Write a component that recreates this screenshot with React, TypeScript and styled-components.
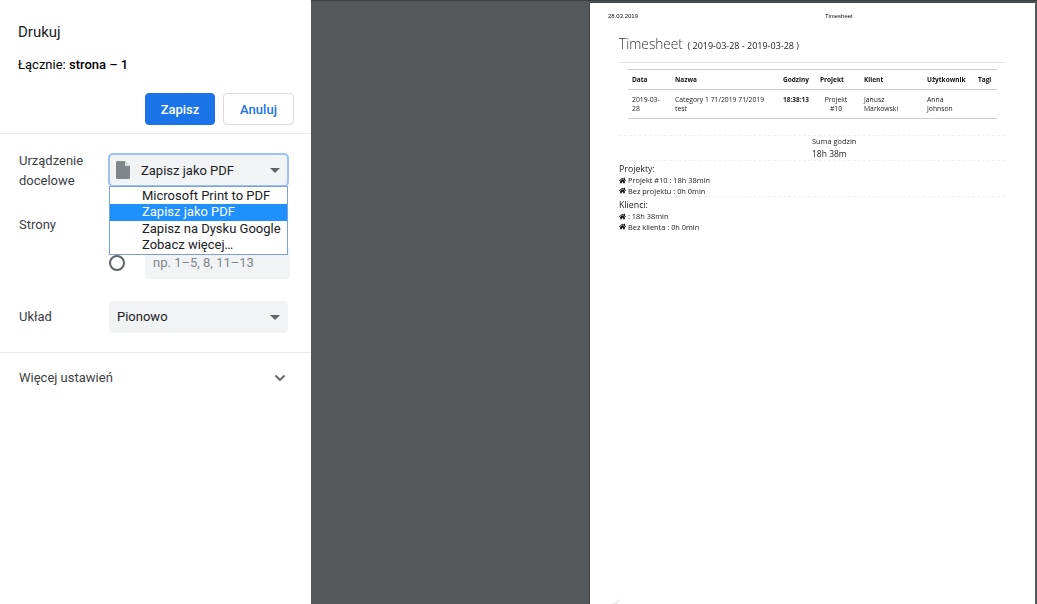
import React from "react";
import styled, { createGlobalStyle } from "styled-components";
import { FaHome } from "react-icons/fa";

const Global = createGlobalStyle`
  html, body { margin: 0; padding: 0; height: 100%; overflow: hidden; }
  #root { height: 100%; }
`;

const Screen = styled.div`
  display: flex;
  width: 1037px;
  height: 604px;
  overflow: hidden;
  font-family: Roboto, "Liberation Sans", sans-serif;
  background: #54585a;
`;

const Sidebar = styled.aside`
  position: relative;
  width: 311px;
  flex: none;
  background: #fff;
  color: #202124;
  box-sizing: border-box;
`;

const Head = styled.header`
  padding: 22px 17px 0 18px;
  box-sizing: border-box;
  border-bottom: 1px solid #e8eaed;
  height: 134px;
`;

const Title = styled.h1`
  margin: 0;
  font-size: 15px;
  line-height: 20px;
  font-weight: 400;
`;

const Total = styled.p`
  margin: 13px 0 0;
  font-size: 13px;
  line-height: 20px;
  color: #000;
  font-weight: 400;
  b { font-weight: 500; }
`;

const Actions = styled.div`
  display: flex;
  justify-content: flex-end;
  gap: 8px;
  margin-top: 18px;
`;

const Button = styled.button<{ $primary?: boolean }>`
  height: 32px;
  width: ${(p) => (p.$primary ? "70px" : "71px")};
  padding: 0;
  border-radius: 4px;
  border: 1px solid ${(p) => (p.$primary ? "#1a73e8" : "#dadce0")};
  background: ${(p) => (p.$primary ? "#1a73e8" : "#fff")};
  color: ${(p) => (p.$primary ? "#fff" : "#1a73e8")};
  font: 500 13px Roboto, sans-serif;
`;

const Settings = styled.section`
  display: grid;
  grid-template-columns: 90px 179px;
  padding: 20px 0 0 19px;
  height: 219px;
  box-sizing: border-box;
  border-bottom: 1px solid #e8eaed;
  align-content: start;
`;

const Label = styled.div<{ $top?: number }>`
  font-size: 13px;
  line-height: 20px;
  color: #3c4043;
  margin-top: ${(p) => p.$top ?? 0}px;
`;

const SelectBox = styled.div<{ $focused?: boolean; $top?: number }>`
  position: relative;
  display: flex;
  align-items: center;
  height: 32px;
  box-sizing: border-box;
  border-radius: 4px;
  background: #f1f3f4;
  font-size: 13px;
  color: #202124;
  padding: 0 0 ${(p) => (p.$focused ? 0 : 2)}px ${(p) => (p.$focused ? 7 : 8)}px;
  margin-top: ${(p) => p.$top ?? 0}px;
  ${(p) => p.$focused && "outline: 2px solid #9cc1f3; outline-offset: -1px;"}
`;

const Arrow = styled.span`
  position: absolute;
  right: 8px;
  top: 14px;
  width: 0;
  height: 0;
  border-left: 5px solid transparent;
  border-right: 5px solid transparent;
  border-top: 5px solid #5f6368;
`;

const DocIcon = styled.svg`
  width: 14px;
  height: 18px;
  margin: 0 11px 0 0;
  flex: none;
`;

const Dropdown = styled.ul`
  position: absolute;
  left: 109px;
  top: 186px;
  width: 179px;
  height: 69px;
  margin: 0;
  padding: 1px 0 0;
  box-sizing: border-box;
  list-style: none;
  background: #fff;
  border: 1px solid #7b9fd8;
  z-index: 2;
`;

const Option = styled.li<{ $active?: boolean }>`
  height: 16.4px;
  line-height: 16px;
  padding-left: 32px;
  font-size: 13px;
  white-space: nowrap;
  color: ${(p) => (p.$active ? "#fff" : "#202124")};
  background: ${(p) => (p.$active ? "#1e90ff" : "transparent")};
`;

const PagesRow = styled.div`
  display: flex;
  align-items: center;
  gap: 20px;
  height: 32px;
  margin-top: 56px;
`;

const Radio = styled.span`
  width: 16px;
  height: 16px;
  box-sizing: border-box;
  border: 2px solid #5f6368;
  border-radius: 50%;
  flex: none;
`;

const PagesInput = styled.div`
  width: 145px;
  flex: none;
  height: 32px;
  line-height: 32px;
  box-sizing: border-box;
  padding-left: 8px;
  background: #f1f3f4;
  border-radius: 4px;
  font-size: 13px;
  color: #80868b;
`;

const More = styled.div`
  display: flex;
  align-items: center;
  justify-content: space-between;
  height: 49px;
  padding: 0 25px 0 19px;
  font-size: 13px;
  color: #3c4043;
`;

const Preview = styled.main`
  flex: 1;
  display: flex;
  justify-content: flex-end;
  padding: 2px 2px 0 0;
  border-top: 1px solid #3c3f42;
  box-sizing: border-box;
  height: 604px;
`;

const Sheet = styled.article`
  position: relative;
  width: 445px;
  height: 640px;
  background: #fff;
  box-shadow: -1px -1px 0 #3f4245;
  box-sizing: border-box;
  color: #222;
  font-family: "Open Sans", sans-serif;
  filter: blur(0.22px);
`;

const PrintHead = styled.div`
  display: grid;
  grid-template-columns: 217px auto;
  padding: 9px 0 0 18px;
  height: 10px;
  font: 6px/8px "Liberation Sans", sans-serif;
  color: #111;
`;

const Body = styled.div`
  padding: 0 30px 0 29px;
`;

const Heading = styled.h2`
  margin: 12px 0 0;
  font-size: 13.7px;
  line-height: 19px;
  font-weight: 300;
  color: #333;
  small { font-size: 9px; font-weight: 400; color: #222; margin-left: 1px; }
`;

const Rule = styled.hr`
  border: 0;
  height: 1px;
  background: #dfe4ea;
  margin: 7px 0 6px;
`;

const Table = styled.table`
  width: 369px;
  margin-left: 9px;
  border-collapse: collapse;
  table-layout: fixed;
  font-size: 6.8px;
  line-height: 9px;
  color: #222;
  th {
    text-align: left;
    font-weight: 700;
    color: #111;
    padding: 0 0 0 4px;
    height: 19px;
    border-top: 1px solid #ccc;
    border-bottom: 1px solid #ccc;
    font-size: 6.5px;
    white-space: nowrap;
  }
  td {
    padding: 5px 6px 5px 4px;
    height: 28px;
    box-sizing: border-box;
    vertical-align: top;
    border-bottom: 1px solid #ccc;
  }
`;

const TimeCell = styled.td`
  font-weight: 700;
  font-size: 6.5px;
  && { padding-right: 0; }
`;

const CenterCell = styled.td`
  text-align: center;
  && { padding-right: 8px; }
`;

const Band = styled.div<{ $top: number }>`
  margin-top: ${(p) => p.$top}px;
  border-top: 1px dashed #f0f0f0;
`;

const Sum = styled.div`
  padding-left: 193px;
  height: 24px;
  small { display: block; font-size: 7.4px; line-height: 10px; color: #222; margin-top: 0; }
  span { display: block; font-size: 8.5px; line-height: 13px; color: #222; margin-top: 1px; }
`;

const GroupTitle = styled.div`
  font-size: 8.8px;
  line-height: 11px;
  margin-top: 3px;
  color: #222;
`;

const Stat = styled.div`
  display: flex;
  align-items: center;
  gap: 2px;
  font-size: 7.4px;
  line-height: 10.5px;
  color: #222;
  svg { width: 7px; height: 7px; color: #111; flex: none; }
`;

const Mark = styled.svg`
  position: absolute;
  left: 20px;
  top: 592px;
  width: 16px;
  height: 12px;
`;

const rows = ["Projekt #10 : 18h 38min", "Bez projektu : 0h 0min"];
const clients = [": 18h 38min", "Bez klienta : 0h 0min"];
const cols = [43, 108, 37, 44, 63, 51, 23];
const headers = ["Data", "Nazwa", "Godziny", "Projekt", "Klient", "Użytkownik", "Tagi"];

export default function App() {
  return (
    <Screen>
      <Global />
      <Sidebar>
        <Head>
          <Title>Drukuj</Title>
          <Total>
            Łącznie: <b>strona – 1</b>
          </Total>
          <Actions>
            <Button $primary>Zapisz</Button>
            <Button>Anuluj</Button>
          </Actions>
        </Head>
        <Settings>
          <Label $top={-3}>
            Urządzenie
            <br />
            docelowe
          </Label>
          <SelectBox $focused>
            <DocIcon viewBox="0 0 14 18">
              <path d="M2 0h7l5 5v11.5a1.5 1.5 0 0 1-1.5 1.5h-11A1.5 1.5 0 0 1 0 16.5v-15A1.5 1.5 0 0 1 2 0z" fill="#80868b" />
              <path d="M9 0l5 5H9z" fill="#dadce0" />
            </DocIcon>
            Zapisz jako PDF
            <Arrow />
          </SelectBox>
          <Label $top={24}>Strony</Label>
          <PagesRow>
            <Radio />
            <PagesInput>np. 1–5, 8, 11–13</PagesInput>
          </PagesRow>
          <Label $top={28}>Układ</Label>
          <SelectBox $top={22}>
            Pionowo
            <Arrow />
          </SelectBox>
        </Settings>
        <Dropdown>
          <Option>Microsoft Print to PDF</Option>
          <Option $active>Zapisz jako PDF</Option>
          <Option>Zapisz na Dysku Google</Option>
          <Option>Zobacz więcej…</Option>
        </Dropdown>
        <More>
          Więcej ustawień
          <svg width="12" height="8" viewBox="0 0 12 8">
            <path d="M1.5 1.5L6 6l4.5-4.5" fill="none" stroke="#5f6368" strokeWidth="1.8" />
          </svg>
        </More>
      </Sidebar>
      <Preview>
        <Sheet>
          <PrintHead>
            <span>28.03.2019</span>
            <span>Timesheet</span>
          </PrintHead>
          <Body>
            <Heading>
              Timesheet <small>( 2019-03-28 - 2019-03-28 )</small>
            </Heading>
            <Rule />
            <Table>
              <colgroup>
                {cols.map((w, i) => (
                  <col key={i} width={w} />
                ))}
              </colgroup>
              <thead>
                <tr>
                  {headers.map((h) => (
                    <th key={h}>{h}</th>
                  ))}
                </tr>
              </thead>
              <tbody>
                <tr>
                  <td>2019-03-28</td>
                  <td>Category 1 71/2019 71/2019 test</td>
                  <TimeCell>18:38:13</TimeCell>
                  <CenterCell>Projekt #10</CenterCell>
                  <td>
                    Janusz
                    <br />
                    Markowski
                  </td>
                  <td>
                    Anna
                    <br />
                    Johnson
                  </td>
                  <td />
                </tr>
              </tbody>
            </Table>
            <Band $top={16} />
            <Sum>
              <small>Suma godzin</small>
              <span>18h 38m</span>
            </Sum>
            <Band $top={0} />
            <GroupTitle>Projekty:</GroupTitle>
            {rows.map((r) => (
              <Stat key={r}>
                <FaHome />
                {r}
              </Stat>
            ))}
            <Band $top={0} />
            <GroupTitle>Klienci:</GroupTitle>
            {clients.map((r) => (
              <Stat key={r}>
                <FaHome />
                {r}
              </Stat>
            ))}
          </Body>
          <Mark viewBox="0 0 16 12">
            <path d="M3 12V9h2l4-4M8 10h3" fill="none" stroke="#e4e4e4" strokeWidth="1.4" />
          </Mark>
        </Sheet>
      </Preview>
    </Screen>
  );
}
